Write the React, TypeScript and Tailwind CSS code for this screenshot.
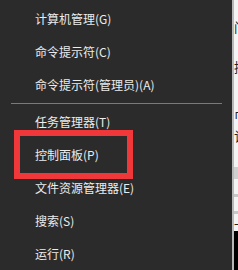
const items = [
  "计算机管理(G)",
  "命令提示符(C)",
  "命令提示符(管理员)(A)",
  null,
  "任务管理器(T)",
  "控制面板(P)",
  "文件资源管理器(E)",
  "搜索(S)",
  "运行(R)",
];

export default function App() {
  return (
    <div
      className="flex h-[270px] w-[238px] overflow-hidden bg-white"
      style={{ fontFamily: '"Noto Sans CJK SC", "Noto Sans", sans-serif' }}
    >
      {/* Context menu */}
      <div className="relative flex w-[232px] shrink-0 flex-col bg-[#2b2b2b] pt-[2px]">
        {items.map((label, i) =>
          label === null ? (
            <div key={i} className="flex h-[8px] items-center pl-[11px] pr-[10px]">
              <div className="h-px w-full bg-[#7a7a7a]" />
            </div>
          ) : (
            <div
              key={i}
              className="flex h-[33px] shrink-0 items-center pl-[35px] text-[12px] text-[#ececec]"
            >
              {label}
            </div>
          )
        )}
        {/* Highlight box */}
        <div className="absolute left-[14px] top-[130px] h-[49px] w-[119px] border-[6px] border-[#f0383a]" />
      </div>

      {/* Document behind the menu */}
      <div className="flex flex-1 flex-col border-l-2 border-[#b8b8b8] bg-[#f4f4f4] text-[13px] leading-none text-[#222]">
        <div className="mt-[20px] h-[14px] overflow-hidden">门</div>
        <div className="mt-[26px] h-[14px] overflow-hidden">控</div>
        <div className="mt-[4px] h-[10px] overflow-hidden">,</div>
        <div className="mt-[21px] h-[10px] overflow-hidden">口</div>
        <div className="mt-[10px] h-[14px] overflow-hidden">记</div>
        <div className="mt-[4px] h-[10px] overflow-hidden">,</div>
        <div className="mt-[10px] h-[12px] bg-[#d0d0d0]" />
        <div className="mt-[2px] h-[10px] overflow-hidden">,</div>
        <div className="mt-[3px] h-[3px] bg-[#c8c8c8]" />
        <div className="mt-[14px] h-[3px] bg-[#c8c8c8]" />
        <div className="mt-[3px] h-[10px] overflow-hidden">一</div>
        <div className="mt-[4px] flex-1 bg-black" />
      </div>
    </div>
  );
}
